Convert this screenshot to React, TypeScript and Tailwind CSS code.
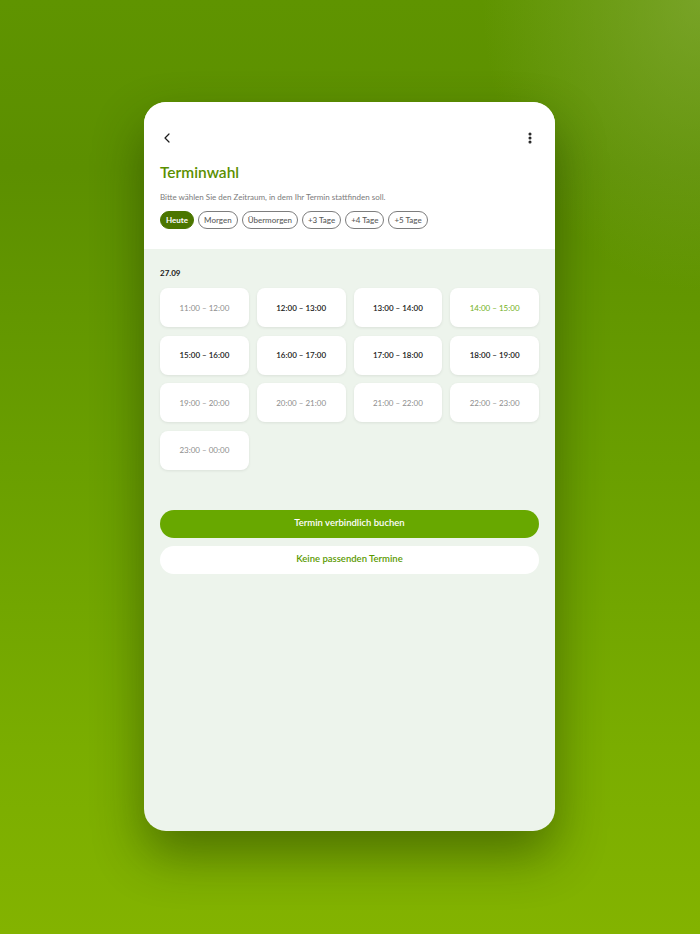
import { ChevronLeft, EllipsisVertical } from "lucide-react";

type SlotState = "off" | "on" | "selected";

const DAYS = ["Heute", "Morgen", "Übermorgen", "+3 Tage", "+4 Tage", "+5 Tage"];

const SLOTS: { label: string; state: SlotState }[] = [
  { label: "11:00 – 12:00", state: "off" },
  { label: "12:00 – 13:00", state: "on" },
  { label: "13:00 – 14:00", state: "on" },
  { label: "14:00 – 15:00", state: "selected" },
  { label: "15:00 – 16:00", state: "on" },
  { label: "16:00 – 17:00", state: "on" },
  { label: "17:00 – 18:00", state: "on" },
  { label: "18:00 – 19:00", state: "on" },
  { label: "19:00 – 20:00", state: "off" },
  { label: "20:00 – 21:00", state: "off" },
  { label: "21:00 – 22:00", state: "off" },
  { label: "22:00 – 23:00", state: "off" },
  { label: "23:00 – 00:00", state: "off" },
];

const slotText: Record<SlotState, string> = {
  off: "text-[#8d8d8d] font-normal",
  on: "text-[#1a1a1a] font-semibold",
  selected: "text-[#72b01a] font-normal",
};

export default function App() {
  return (
    <main className="h-[934px] w-full flex items-center justify-center font-['Lato',sans-serif] bg-[radial-gradient(ellipse_at_100%_0%,rgba(140,175,70,0.55),rgba(140,175,70,0)_22%),linear-gradient(180deg,#5f9400_0%,#5c8f00_18%,#6a9f00_50%,#7aad00_80%,#83b300_100%)]">
      <div className="w-[411px] h-[729px] -mt-[1px] -ml-[1px] rounded-[22px] overflow-hidden flex flex-col bg-[#edf4ec] shadow-[0_24px_50px_rgba(20,40,0,0.45)]">
        {/* ── Header ── */}
        <header className="bg-white px-4 pt-[26px] pb-[20px]">
          <div className="h-[20px] flex items-center justify-between">
            <ChevronLeft className="w-[16px] h-[16px] text-[#1a1a1a] -ml-[1px]" strokeWidth={1.8} />
            <EllipsisVertical className="w-[14px] h-[14px] text-[#1a1a1a] mr-[2px]" strokeWidth={3.2} />
          </div>
          <h1 className="mt-[13px] text-[15.5px] leading-[22px] font-semibold text-[#5b8f00]">Terminwahl</h1>
          <p className="mt-[8px] text-[8px] leading-[12px] text-[#7b7b7b]">
            Bitte wählen Sie den Zeitraum, in dem Ihr Termin stattfinden soll.
          </p>
          <div className="mt-[8px] flex items-center gap-[4px]">
            {DAYS.map((d, i) =>
              i === 0 ? (
                <span
                  key={d}
                  className="h-[18px] px-[5px] rounded-full bg-[#4b7600] border border-[#4b7600] text-white text-[8px] font-bold flex items-center"
                >
                  {d}
                </span>
              ) : (
                <span
                  key={d}
                  className="h-[18px] px-[5px] rounded-full border border-[#7d7d7d] text-[#5a5a5a] text-[8px] font-medium flex items-center"
                >
                  {d}
                </span>
              )
            )}
          </div>
        </header>

        {/* ── Slots ── */}
        <section className="px-4 pt-[18px]">
          <div className="text-[8px] leading-[12px] font-bold text-[#1a1a1a]">27.09</div>
          <div className="mt-[9px] grid grid-cols-4 gap-x-[8px] gap-y-[8.5px]">
            {SLOTS.map((s) => (
              <div
                key={s.label}
                className={`h-[39px] rounded-[8px] bg-white shadow-[0_1px_3px_rgba(0,0,0,0.08)] flex items-center justify-center text-[8px] ${slotText[s.state]}`}
              >
                {s.label}
              </div>
            ))}
          </div>

          <div className="mt-[40px] flex flex-col gap-[8px]">
            <button className="h-[28px] rounded-full bg-[#68a800] text-white text-[9.5px] font-semibold">
              Termin verbindlich buchen
            </button>
            <button className="h-[28px] rounded-full bg-white text-[#5b9a00] text-[9.5px] font-semibold">
              Keine passenden Termine
            </button>
          </div>
        </section>
      </div>
    </main>
  );
}
